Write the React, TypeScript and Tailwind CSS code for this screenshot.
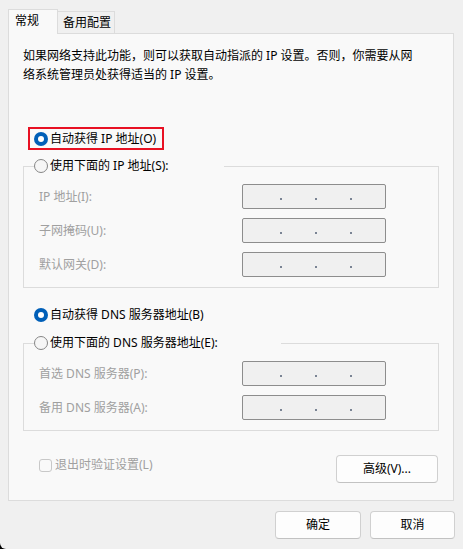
import type { FC, ReactNode } from 'react';

const FONT = "font-['Noto_Sans','Noto_Sans_CJK_SC',sans-serif]";

const Radio: FC<{ checked?: boolean }> = ({ checked = false }) =>
  checked ? (
    <span className="flex h-[14px] w-[14px] shrink-0 items-center justify-center rounded-full bg-[#005fb8]">
      <span className="h-[6px] w-[6px] rounded-full bg-white" />
    </span>
  ) : (
    <span className="h-[14px] w-[14px] shrink-0 rounded-full border border-[#868686] bg-[#f6f6f6]" />
  );

const IpBox: FC = () => (
  <div className="flex h-[25px] w-[144px] items-start gap-[33px] rounded-[2px] border border-[#8d8d8d] bg-[#f0f0f0] pl-[37px] pt-[13px]">
    <span className="h-[2px] w-[2px] bg-[#7a8494]" />
    <span className="h-[2px] w-[2px] bg-[#7a8494]" />
    <span className="h-[2px] w-[2px] bg-[#7a8494]" />
  </div>
);

const Field: FC<{ label: string }> = ({ label }) => (
  <div className="grid grid-cols-[203px_144px] items-center">
    <span className="text-[12px] leading-[16px] text-[#a0a0a0]">{label}</span>
    <IpBox />
  </div>
);

const Group: FC<{ legend: string; legendWidth: string; children: ReactNode; className?: string }> = ({
  legend,
  legendWidth,
  children,
  className,
}) => (
  <fieldset className={`mx-[14px] border border-[#dcdcdc] p-0 ${className ?? ''}`}>
    <legend className={`ml-[10px] flex h-[20px] items-center gap-[2px] ${legendWidth}`}>
      <Radio />
      <span className="whitespace-nowrap text-[12px] leading-[20px] text-black">{legend}</span>
    </legend>
    <div className="flex flex-col gap-[9px] pb-[10px] pl-[15px] pt-[8px]">{children}</div>
  </fieldset>
);

const Button: FC<{ children: ReactNode; className?: string }> = ({ children, className }) => (
  <button
    type="button"
    className={`flex h-[28px] items-center justify-center rounded-[4px] border border-[#d0d0d0] border-b-[#c2c2c2] bg-[#fdfdfd] text-[12px] text-black ${className ?? ''}`}
  >
    {children}
  </button>
);

export default function App() {
  return (
    <div className={`h-[549px] w-[463px] bg-black ${FONT}`}>
      <div className="flex h-full flex-col rounded-bl-[6px] bg-[#f0f0f0]">
        {/* tabs */}
        <div className="flex items-end pl-[8px] pt-[9px]">
          <div className="relative z-10 -mb-px h-[25px] w-[50px] border border-b-0 border-[#dcdcdc] bg-[#f9f9f9] pl-[6px] pt-[3px] text-[12px] leading-[16px] text-black">
            常规
          </div>
          <div className="h-[22px] w-[57px] border-r border-t border-[#dcdcdc] bg-[#f0f0f0] pl-[5px] pt-[3px] text-[12px] leading-[16px] text-black">
            备用配置
          </div>
        </div>

        {/* panel */}
        <div className="mx-[8px] flex h-[468px] w-[446px] flex-col border border-[#dcdcdc] bg-[#f9f9f9]">
          <p className="mt-[12px] whitespace-nowrap pl-[14px] text-[12px] leading-[19px] text-black">
            如果网络支持此功能，则可以获取自动指派的 IP 设置。否则，你需要从网
            <br />
            络系统管理员处获得适当的 IP 设置。
          </p>

          <div className="ml-[19px] mt-[43px] flex h-[23px] w-[136px] items-center gap-[2px] border-2 border-[#e81123] pl-[4px]">
            <Radio checked />
            <span className="whitespace-nowrap text-[12px] leading-[16px] text-black">自动获得 IP 地址(O)</span>
          </div>

          <Group legend="使用下面的 IP 地址(S):" legendWidth="w-[190px]" className="mt-[6px]">
            <Field label="IP 地址(I):" />
            <Field label="子网掩码(U):" />
            <Field label="默认网关(D):" />
          </Group>

          <div className="ml-[25px] mt-[17px] flex h-[20px] items-center gap-[2px]">
            <Radio checked />
            <span className="whitespace-nowrap text-[12px] leading-[20px] text-black">自动获得 DNS 服务器地址(B)</span>
          </div>

          <Group legend="使用下面的 DNS 服务器地址(E):" legendWidth="w-[247px]" className="mt-[8px]">
            <Field label="首选 DNS 服务器(P):" />
            <Field label="备用 DNS 服务器(A):" />
          </Group>

          <div className="mt-[24px] flex items-start justify-between pl-[30px] pr-[15px]">
            <label className="flex items-center gap-[3px] pt-[2px]">
              <span className="h-[13px] w-[13px] rounded-[3px] border border-[#c8c8c8] bg-[#f9f9f9]" />
              <span className="text-[12px] leading-[16px] text-[#a0a0a0]">退出时验证设置(L)</span>
            </label>
            <Button className="w-[102px]">高级(V)...</Button>
          </div>
        </div>

        {/* footer */}
        <div className="mt-[10px] flex justify-end gap-[9px] pr-[8px]">
          <Button className="w-[86px]">确定</Button>
          <Button className="w-[85px]">取消</Button>
        </div>
      </div>
    </div>
  );
}
